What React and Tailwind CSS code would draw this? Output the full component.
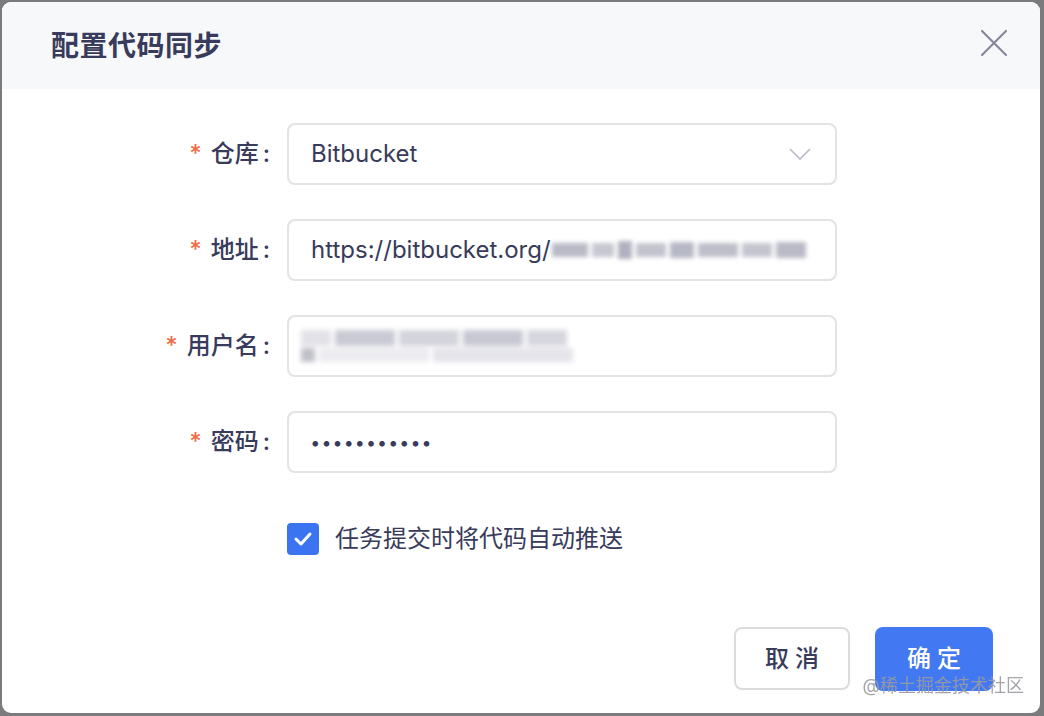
import React, { useState } from "react";

const FONT = {
  fontFamily: '"Inter", "Noto Sans CJK SC", "Noto Sans", sans-serif',
};

function Label({ text }) {
  return (
    <div className="w-[285px] shrink-0 flex items-center justify-end pr-[17px] text-[24px] font-medium text-[#383b5b]">
      <span className="text-[#ea6f4c] mr-[9px] text-[24px]">*</span>
      <span>{text}</span>
      <span className="ml-[4px]">:</span>
    </div>
  );
}

function Field({ children }) {
  return (
    <div className="w-[550px] h-[62px] border-2 border-[#e3e3e6] rounded-[8px] bg-white flex items-center px-[22px] text-[24px] text-[#383b5b] overflow-hidden">
      {children}
    </div>
  );
}

function Row({ label, children }) {
  return (
    <div className="flex items-center">
      <Label text={label} />
      <Field>{children}</Field>
    </div>
  );
}

export default function App() {
  const [autoPush, setAutoPush] = useState(true);

  return (
    <div className="w-[1044px] h-[716px] bg-[#7b7b7d] p-[2px] pb-[3px]" style={FONT}>
      <div className="relative w-[1038px] h-full bg-white rounded-[9px] overflow-hidden flex flex-col">
        <div className="h-[87px] shrink-0 bg-[#f7f8fa] flex items-center justify-between pl-[49px] pr-[32px]">
          <h1 className="text-[28px] font-bold text-[#383b5b] tracking-[0.5px]">配置代码同步</h1>
          <svg width="28" height="28" viewBox="0 0 28 28" className="text-[#85889a] -mt-[6px]">
            <path d="M2 2 L26 26 M26 2 L2 26" stroke="currentColor" strokeWidth="2.2" strokeLinecap="round" />
          </svg>
        </div>

        <div className="flex flex-col gap-[34px] pt-[34px]">
          <Row label="仓库">
            <span className="flex-1">Bitbucket</span>
            <svg width="22" height="12" viewBox="0 0 22 12" className="mr-[2px] text-[#b8bac4]">
              <path d="M1 1 L11 11 L21 1" fill="none" stroke="currentColor" strokeWidth="1.6" />
            </svg>
          </Row>
          <Row label="地址">
            <span className="whitespace-nowrap">https://bitbucket.org/</span>
            <div className="flex items-center gap-[4px] blur-[2px] h-[22px] ml-[1px]">
              <div className="w-[36px] h-[14px] bg-[#b9bac6]" />
              <div className="w-[22px] h-[14px] bg-[#c6c7d1]" />
              <div className="w-[14px] h-[18px] bg-[#b0b1bf]" />
              <div className="w-[30px] h-[14px] bg-[#c2c3cd]" />
              <div className="w-[24px] h-[16px] bg-[#b7b8c5]" />
              <div className="w-[40px] h-[14px] bg-[#bdbec9]" />
              <div className="w-[30px] h-[14px] bg-[#c4c5cf]" />
              <div className="w-[30px] h-[16px] bg-[#b9bac6]" />
            </div>
          </Row>
          <Row label="用户名">
            <div className="flex flex-col gap-[2px] -ml-[10px] blur-[2.5px]">
              <div className="flex gap-[4px]">
                <div className="w-[30px] h-[16px] bg-[#e2e2e8]" />
                <div className="w-[60px] h-[16px] bg-[#c9cad4]" />
                <div className="w-[60px] h-[16px] bg-[#d3d4dc]" />
                <div className="w-[60px] h-[16px] bg-[#c7c8d2]" />
                <div className="w-[40px] h-[16px] bg-[#d6d7de]" />
              </div>
              <div className="flex gap-[4px]">
                <div className="w-[14px] h-[14px] bg-[#c0c0c8]" />
                <div className="w-[110px] h-[14px] bg-[#ececf0]" />
                <div className="w-[140px] h-[14px] bg-[#e4e4ea]" />
              </div>
            </div>
          </Row>
          <Row label="密码">
            <span className="tracking-[2.6px] text-[18px] font-bold">•••••••••••</span>
          </Row>
        </div>

        <div className="flex items-center pl-[285px] pt-[48px]">
          <button
            onClick={() => setAutoPush(!autoPush)}
            className={`w-[32px] h-[32px] rounded-[4px] flex items-center justify-center ${autoPush ? "bg-[#3b74f1]" : "bg-white border-2 border-[#d0d0d6]"}`}
          >
            {autoPush && (
              <svg width="20" height="16" viewBox="0 0 20 16">
                <path d="M3 8 L8 13 L17 3" fill="none" stroke="white" strokeWidth="3" strokeLinecap="round" strokeLinejoin="round" />
              </svg>
            )}
          </button>
          <span className="ml-[16px] text-[24px] text-[#383b5b]">任务提交时将代码自动推送</span>
        </div>

        <div className="flex-1" />

        <div className="flex justify-end gap-[25px] pr-[47px] pb-[22px]">
          <button className="w-[116px] h-[63px] border-2 border-[#dcdcdf] rounded-[8px] bg-white text-[24px] font-medium text-[#383b5b] tracking-[6px] pl-[6px]">
            取消
          </button>
          <button className="w-[118px] h-[64px] rounded-[8px] bg-[#4279f2] text-[24px] font-medium text-white tracking-[6px] pl-[6px]">
            确定
          </button>
        </div>

        <div className="absolute right-[16px] bottom-[14px] text-[18px] text-[#9a9aa0] opacity-90 pointer-events-none">
          @稀土掘金技术社区
        </div>
      </div>
    </div>
  );
}
